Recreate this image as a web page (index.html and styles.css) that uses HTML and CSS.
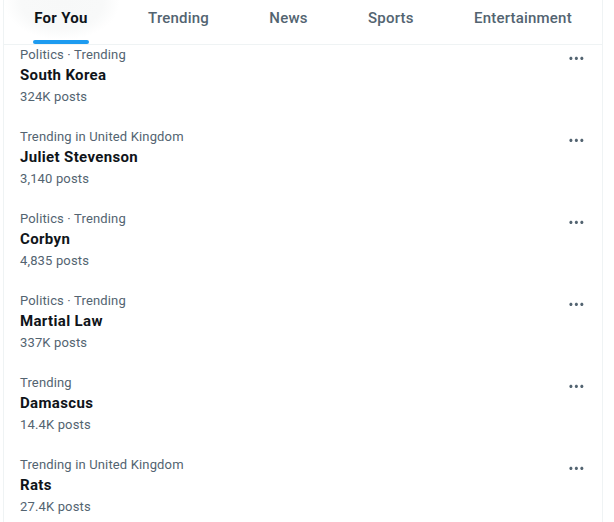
FILE: index.html
```html
<!DOCTYPE html>
<html lang="en">
<head>
<meta charset="utf-8">
<link rel="stylesheet" href="styles.css">
</head>
<body>
<div class="column">
  <nav class="tabs">
    <div class="tab active"><span class="tab-label">For You</span><span class="indicator"></span></div>
    <div class="tab"><span class="tab-label">Trending</span></div>
    <div class="tab"><span class="tab-label">News</span></div>
    <div class="tab"><span class="tab-label">Sports</span></div>
    <div class="tab"><span class="tab-label">Entertainment</span></div>
  </nav>
  <ul class="trends">
    <li class="trend first">
      <div class="info">
        <div class="meta">Politics · Trending</div>
        <div class="title">South Korea</div>
        <div class="count">324K posts</div>
      </div>
      <svg class="more" viewBox="0 0 24 24"><path d="M3 12c0-1.1.9-2 2-2s2 .9 2 2-.9 2-2 2-2-.9-2-2zm9 2c1.1 0 2-.9 2-2s-.9-2-2-2-2 .9-2 2 .9 2 2 2zm7 0c1.1 0 2-.9 2-2s-.9-2-2-2-2 .9-2 2 .9 2 2 2z"/></svg>
    </li>
    <li class="trend">
      <div class="info">
        <div class="meta">Trending in United Kingdom</div>
        <div class="title">Juliet Stevenson</div>
        <div class="count">3,140 posts</div>
      </div>
      <svg class="more" viewBox="0 0 24 24"><path d="M3 12c0-1.1.9-2 2-2s2 .9 2 2-.9 2-2 2-2-.9-2-2zm9 2c1.1 0 2-.9 2-2s-.9-2-2-2-2 .9-2 2 .9 2 2 2zm7 0c1.1 0 2-.9 2-2s-.9-2-2-2-2 .9-2 2 .9 2 2 2z"/></svg>
    </li>
    <li class="trend">
      <div class="info">
        <div class="meta">Politics · Trending</div>
        <div class="title">Corbyn</div>
        <div class="count">4,835 posts</div>
      </div>
      <svg class="more" viewBox="0 0 24 24"><path d="M3 12c0-1.1.9-2 2-2s2 .9 2 2-.9 2-2 2-2-.9-2-2zm9 2c1.1 0 2-.9 2-2s-.9-2-2-2-2 .9-2 2 .9 2 2 2zm7 0c1.1 0 2-.9 2-2s-.9-2-2-2-2 .9-2 2 .9 2 2 2z"/></svg>
    </li>
    <li class="trend">
      <div class="info">
        <div class="meta">Politics · Trending</div>
        <div class="title">Martial Law</div>
        <div class="count">337K posts</div>
      </div>
      <svg class="more" viewBox="0 0 24 24"><path d="M3 12c0-1.1.9-2 2-2s2 .9 2 2-.9 2-2 2-2-.9-2-2zm9 2c1.1 0 2-.9 2-2s-.9-2-2-2-2 .9-2 2 .9 2 2 2zm7 0c1.1 0 2-.9 2-2s-.9-2-2-2-2 .9-2 2 .9 2 2 2z"/></svg>
    </li>
    <li class="trend">
      <div class="info">
        <div class="meta">Trending</div>
        <div class="title">Damascus</div>
        <div class="count">14.4K posts</div>
      </div>
      <svg class="more" viewBox="0 0 24 24"><path d="M3 12c0-1.1.9-2 2-2s2 .9 2 2-.9 2-2 2-2-.9-2-2zm9 2c1.1 0 2-.9 2-2s-.9-2-2-2-2 .9-2 2 .9 2 2 2zm7 0c1.1 0 2-.9 2-2s-.9-2-2-2-2 .9-2 2 .9 2 2 2z"/></svg>
    </li>
    <li class="trend">
      <div class="info">
        <div class="meta">Trending in United Kingdom</div>
        <div class="title">Rats</div>
        <div class="count">27.4K posts</div>
      </div>
      <svg class="more" viewBox="0 0 24 24"><path d="M3 12c0-1.1.9-2 2-2s2 .9 2 2-.9 2-2 2-2-.9-2-2zm9 2c1.1 0 2-.9 2-2s-.9-2-2-2-2 .9-2 2 .9 2 2 2zm7 0c1.1 0 2-.9 2-2s-.9-2-2-2-2 .9-2 2 .9 2 2 2z"/></svg>
    </li>
  </ul>
</div>
</body>
</html>
```

FILE: styles.css
```css
* { box-sizing: border-box; }
html, body {
  margin: 0;
  padding: 0;
  background: #ffffff;
  height: 100%;
  overflow: hidden;
}
body {
  font-family: Roboto, "Segoe UI", "Liberation Sans", sans-serif;
  color: #0f1419;
}
.column {
  margin-left: 3px;
  width: 600px;
  border-left: 1px solid #eff3f4;
  border-right: 1px solid #eff3f4;
  min-height: 100%;
}
.tabs {
  display: flex;
  height: 45px;
  border-bottom: 1px solid #eff3f4;
  background: radial-gradient(ellipse 58px 38px at 58px 2px, #f7f8f8 0%, #f8f9f9 70%, rgba(255,255,255,0) 100%);
}
.tab {
  flex: 1 1 auto;
  padding: 0 16px;
  display: flex;
  justify-content: center;
  position: relative;
}
.tab-label {
  font-size: 15px;
  line-height: 20px;
  padding-top: 8px;
  font-weight: 500;
  letter-spacing: 0.2px;
  color: #536471;
}
.tab.active .tab-label {
  font-weight: 700;
  letter-spacing: 0.3px;
  color: #0f1419;
}
.indicator {
  position: absolute;
  left: 50%;
  bottom: 0;
  transform: translateX(-50%);
  width: 56px;
  height: 4px;
  border-radius: 9999px;
  background: #1d9bf0;
}
.trends {
  list-style: none;
  margin: 0;
  padding: 0;
}
.trend {
  display: flex;
  justify-content: space-between;
  align-items: flex-start;
  padding: 12px 16px;
}
.trend.first {
  padding-top: 2px;
}
.meta {
  font-size: 13px;
  line-height: 16px;
  letter-spacing: 0.15px;
  color: #536471;
}
.title {
  font-size: 15px;
  line-height: 20px;
  font-weight: 700;
  letter-spacing: 0.35px;
  padding-top: 2px;
  color: #0f1419;
}
.count {
  font-size: 13px;
  line-height: 16px;
  margin-top: 4px;
  letter-spacing: 0.15px;
  color: #536471;
}
.more {
  width: 18.75px;
  height: 18.75px;
  margin-top: 1.6px;
  fill: #536471;
  flex: none;
}
```
